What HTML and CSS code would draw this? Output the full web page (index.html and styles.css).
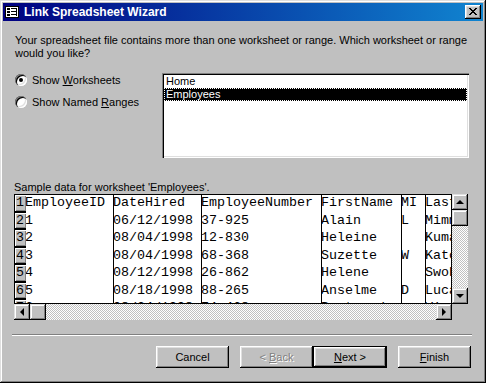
FILE: index.html
```html
<!DOCTYPE html>
<html>
<head>
<meta charset="utf-8">
<link rel="stylesheet" href="styles.css">
</head>
<body>
<div class="window">
  <div class="titlebar">
    <svg class="app-icon" width="14" height="12" viewBox="0 0 14 12" shape-rendering="crispEdges">
      <rect x="0.5" y="0.5" width="13" height="11" fill="#fff" stroke="#000"/>
      <rect x="2" y="2" width="3" height="2" fill="#000"/>
      <rect x="2" y="5" width="3" height="2" fill="#000"/>
      <rect x="2" y="8" width="3" height="2" fill="#000"/>
      <rect x="6" y="2" width="6" height="1" fill="#000"/>
      <rect x="6" y="5" width="6" height="1" fill="#000"/>
      <rect x="6" y="8" width="6" height="1" fill="#000"/>
      <rect x="11" y="2" width="1" height="8" fill="#000"/>
    </svg>
    <span class="title">Link Spreadsheet Wizard</span>
    <div class="close">
      <svg width="8" height="7" viewBox="0 0 8 7" shape-rendering="crispEdges">
        <path d="M0 0h2v1h-2zM6 0h2v1h-2zM1 1h2v1h-2zM5 1h2v1h-2zM2 2h4v1h-4zM3 3h2v1h-2zM2 4h4v1h-4zM1 5h2v1h-2zM5 5h2v1h-2zM0 6h2v1h-2zM6 6h2v1h-2z" fill="#000"/>
      </svg>
    </div>
  </div>

  <div class="content">
    <p class="intro">Your spreadsheet file contains more than one worksheet or range. Which worksheet or range would you like?</p>

    <div class="options">
      <div class="radios">
        <div class="radio-row"><span class="radio checked"></span><span>Show <u>W</u>orksheets</span></div>
        <div class="radio-row"><span class="radio"></span><span>Show Named <u>R</u>anges</span></div>
      </div>
      <div class="listbox">
        <div class="item">Home</div>
        <div class="item selected">Employees</div>
      </div>
    </div>

    <div class="sample-label">Sample data for worksheet 'Employees'.</div>

    <div class="sheet">
      <div class="data">
        <div class="row"><div class="rh">1</div><div class="c c1">EmployeeID</div><div class="c c2">DateHired</div><div class="c c3">EmployeeNumber</div><div class="c c4">FirstName</div><div class="c c5">MI</div><div class="c c6">LastName</div></div>
        <div class="row"><div class="rh">2</div><div class="c c1">1</div><div class="c c2">06/12/1998</div><div class="c c3">37-925</div><div class="c c4">Alain</div><div class="c c5">L</div><div class="c c6">Mimms</div></div>
        <div class="row"><div class="rh">3</div><div class="c c1">2</div><div class="c c2">08/04/1998</div><div class="c c3">12-830</div><div class="c c4">Heleine</div><div class="c c5"></div><div class="c c6">Kumar</div></div>
        <div class="row"><div class="rh">4</div><div class="c c1">3</div><div class="c c2">08/04/1998</div><div class="c c3">68-368</div><div class="c c4">Suzette</div><div class="c c5">W</div><div class="c c6">Kato</div></div>
        <div class="row"><div class="rh">5</div><div class="c c1">4</div><div class="c c2">08/12/1998</div><div class="c c3">26-862</div><div class="c c4">Helene</div><div class="c c5"></div><div class="c c6">Swoboda</div></div>
        <div class="row"><div class="rh">6</div><div class="c c1">5</div><div class="c c2">08/18/1998</div><div class="c c3">88-265</div><div class="c c4">Anselme</div><div class="c c5">D</div><div class="c c6">Lucas</div></div>
        <div class="row"><div class="rh">7</div><div class="c c1">6</div><div class="c c2">08/24/1998</div><div class="c c3">74-468</div><div class="c c4">Bertrand</div><div class="c c5"></div><div class="c c6">Vian</div></div>
      </div>
      <div class="vscroll">
        <div class="sbtn"><span class="arrow up"></span></div>
        <div class="sbtn thumb"></div>
        <div class="track"></div>
        <div class="sbtn"><span class="arrow down"></span></div>
      </div>
      <div class="hscroll">
        <div class="sbtn"><span class="arrow left"></span></div>
        <div class="sbtn thumb"></div>
        <div class="track"></div>
        <div class="sbtn"><span class="arrow right"></span></div>
      </div>
      <div class="corner"></div>
    </div>

    <div class="separator"></div>

    <div class="buttons">
      <div class="btn"><span>Cancel</span></div>
      <div class="btn-pair">
        <div class="btn disabled"><span>&lt; <u>B</u>ack</span></div>
        <div class="btn default"><span><u>N</u>ext &gt;</span></div>
      </div>
      <div class="btn"><span><u>F</u>inish</span></div>
    </div>
  </div>
</div>
</body>
</html>
```

FILE: styles.css
```css
html, body {
  margin: 0;
  padding: 0;
  background: #c0c0c0;
}

.window {
  width: 486px;
  height: 383px;
  box-sizing: border-box;
  padding: 3px;
  background: #c0c0c0;
  box-shadow: inset -1px -1px #000, inset 1px 1px #dfdfdf, inset -2px -2px #808080, inset 2px 2px #fff;
  display: flex;
  flex-direction: column;
  font-family: "Liberation Sans", Arial, sans-serif;
  font-size: 11px;
  color: #000;
}

.titlebar {
  height: 18px;
  display: flex;
  align-items: center;
  padding: 0 2px;
  background: linear-gradient(90deg, #000080, #1084d0);
  color: #fff;
}

.app-icon {
  display: block;
  margin-right: 5px;
}

.title {
  flex: 1;
  font-weight: bold;
  font-size: 12px;
  line-height: 14px;
}

.close {
  width: 16px;
  height: 14px;
  box-sizing: border-box;
  background: #c0c0c0;
  box-shadow: inset -1px -1px #000, inset 1px 1px #fff, inset -2px -2px #808080, inset 2px 2px #dfdfdf;
  display: flex;
  align-items: center;
  justify-content: center;
  padding: 0 1px 1px 0;
}

.close svg {
  display: block;
}

.content {
  flex: 1;
  display: flex;
  flex-direction: column;
  padding: 0 11px 0 9px;
}

.intro {
  margin: 13px 0 0 3px;
  line-height: 13px;
  height: 26px;
}

.options {
  margin-top: 13px;
  display: flex;
  height: 85px;
}

.radios {
  width: 150px;
  display: flex;
  flex-direction: column;
  gap: 10px;
  padding: 1px 0 0 3px;
  box-sizing: border-box;
}

.radio-row {
  display: flex;
  align-items: center;
  height: 12px;
  gap: 5px;
  line-height: 13px;
}

.radio {
  width: 12px;
  height: 12px;
  border-radius: 50%;
  background: #fff;
  box-shadow: inset 1px 1px #808080, inset 2px 2px #000, inset -1px -1px #fff, inset -2px -2px #dfdfdf;
  position: relative;
  flex: none;
}

.radio.checked::after {
  content: "";
  position: absolute;
  left: 4px;
  top: 4px;
  width: 4px;
  height: 4px;
  border-radius: 50%;
  background: #000;
}

.listbox {
  width: 307px;
  height: 85px;
  box-sizing: border-box;
  padding: 2px;
  background: #fff;
  box-shadow: inset 1px 1px #808080, inset 2px 2px #000, inset -1px -1px #fff, inset -2px -2px #dfdfdf;
}

.item {
  height: 13px;
  line-height: 13px;
  padding-left: 2px;
  box-sizing: border-box;
}

.item.selected {
  background: #000;
  color: #fff;
  border: 1px dotted #fff;
  padding-left: 1px;
  line-height: 11px;
}

.sample-label {
  margin: 23px 0 0 2px;
  line-height: 13px;
  height: 13px;
}

.sheet {
  margin-left: 2px;
  width: 454px;
  display: grid;
  grid-template-columns: 438px 16px;
  grid-template-rows: 110px 16px;
}

.data {
  border: 1px solid #000;
  background: #fff;
  overflow: hidden;
  display: grid;
  grid-auto-rows: 17.5px;
  align-content: start;
}

.row {
  display: grid;
  grid-template-columns: 11px 87px 88px 120px 80px 24px 26px;
  font-family: "Liberation Mono", "Courier New", monospace;
  font-size: 13.33px;
  line-height: 15px;
}

.rh {
  background: #c0c0c0;
  box-sizing: border-box;
  box-shadow: inset 1px 1px #fff, inset -1px -1px #808080;
  border-bottom: 2px solid #000;
  text-align: center;
  overflow: hidden;
  text-indent: -1px;
}

.c {
  white-space: nowrap;
  overflow: hidden;
  text-indent: -1px;
}

.c2, .c3, .c4, .c5, .c6 {
  border-left: 1px solid #000;
}

.sbtn {
  width: 16px;
  height: 16px;
  box-sizing: border-box;
  background: #c0c0c0;
  box-shadow: inset -1px -1px #000, inset 1px 1px #dfdfdf, inset -2px -2px #808080, inset 2px 2px #fff;
  display: flex;
  align-items: center;
  justify-content: center;
  flex: none;
}

.track {
  flex: 1;
  background: repeating-conic-gradient(#fff 0 25%, #c0c0c0 0 50%) 0 0 / 2px 2px;
}

.vscroll {
  display: flex;
  flex-direction: column;
}

.hscroll {
  display: flex;
}

.arrow {
  width: 0;
  height: 0;
  border-style: solid;
  border-color: transparent;
}

.arrow.up {
  border-width: 0 4px 4px 4px;
  border-bottom-color: #000;
  margin-bottom: 1px;
}

.arrow.down {
  border-width: 4px 4px 0 4px;
  border-top-color: #000;
}

.arrow.left {
  border-width: 4px 4px 4px 0;
  border-right-color: #000;
  margin-right: 1px;
}

.arrow.right {
  border-width: 4px 0 4px 4px;
  border-left-color: #000;
}

.corner {
  background: #c0c0c0;
}

.separator {
  margin-top: 14px;
  height: 0;
  border-top: 1px solid #808080;
  border-bottom: 1px solid #fff;
}

.buttons {
  margin-top: 10px;
  display: flex;
  justify-content: flex-end;
  gap: 11px;
  padding-right: 1px;
}

.btn-pair {
  display: flex;
}

.btn {
  width: 73px;
  height: 22px;
  box-sizing: border-box;
  background: #c0c0c0;
  box-shadow: inset -1px -1px #000, inset 1px 1px #fff, inset -2px -2px #808080, inset 2px 2px #dfdfdf;
  display: flex;
  align-items: center;
  justify-content: center;
  line-height: 13px;
  white-space: pre;
}

.btn.disabled {
  color: #808080;
  text-shadow: 1px 1px #fff;
}

.btn.default {
  border: 1px solid #000;
  width: 74px;
}
```
